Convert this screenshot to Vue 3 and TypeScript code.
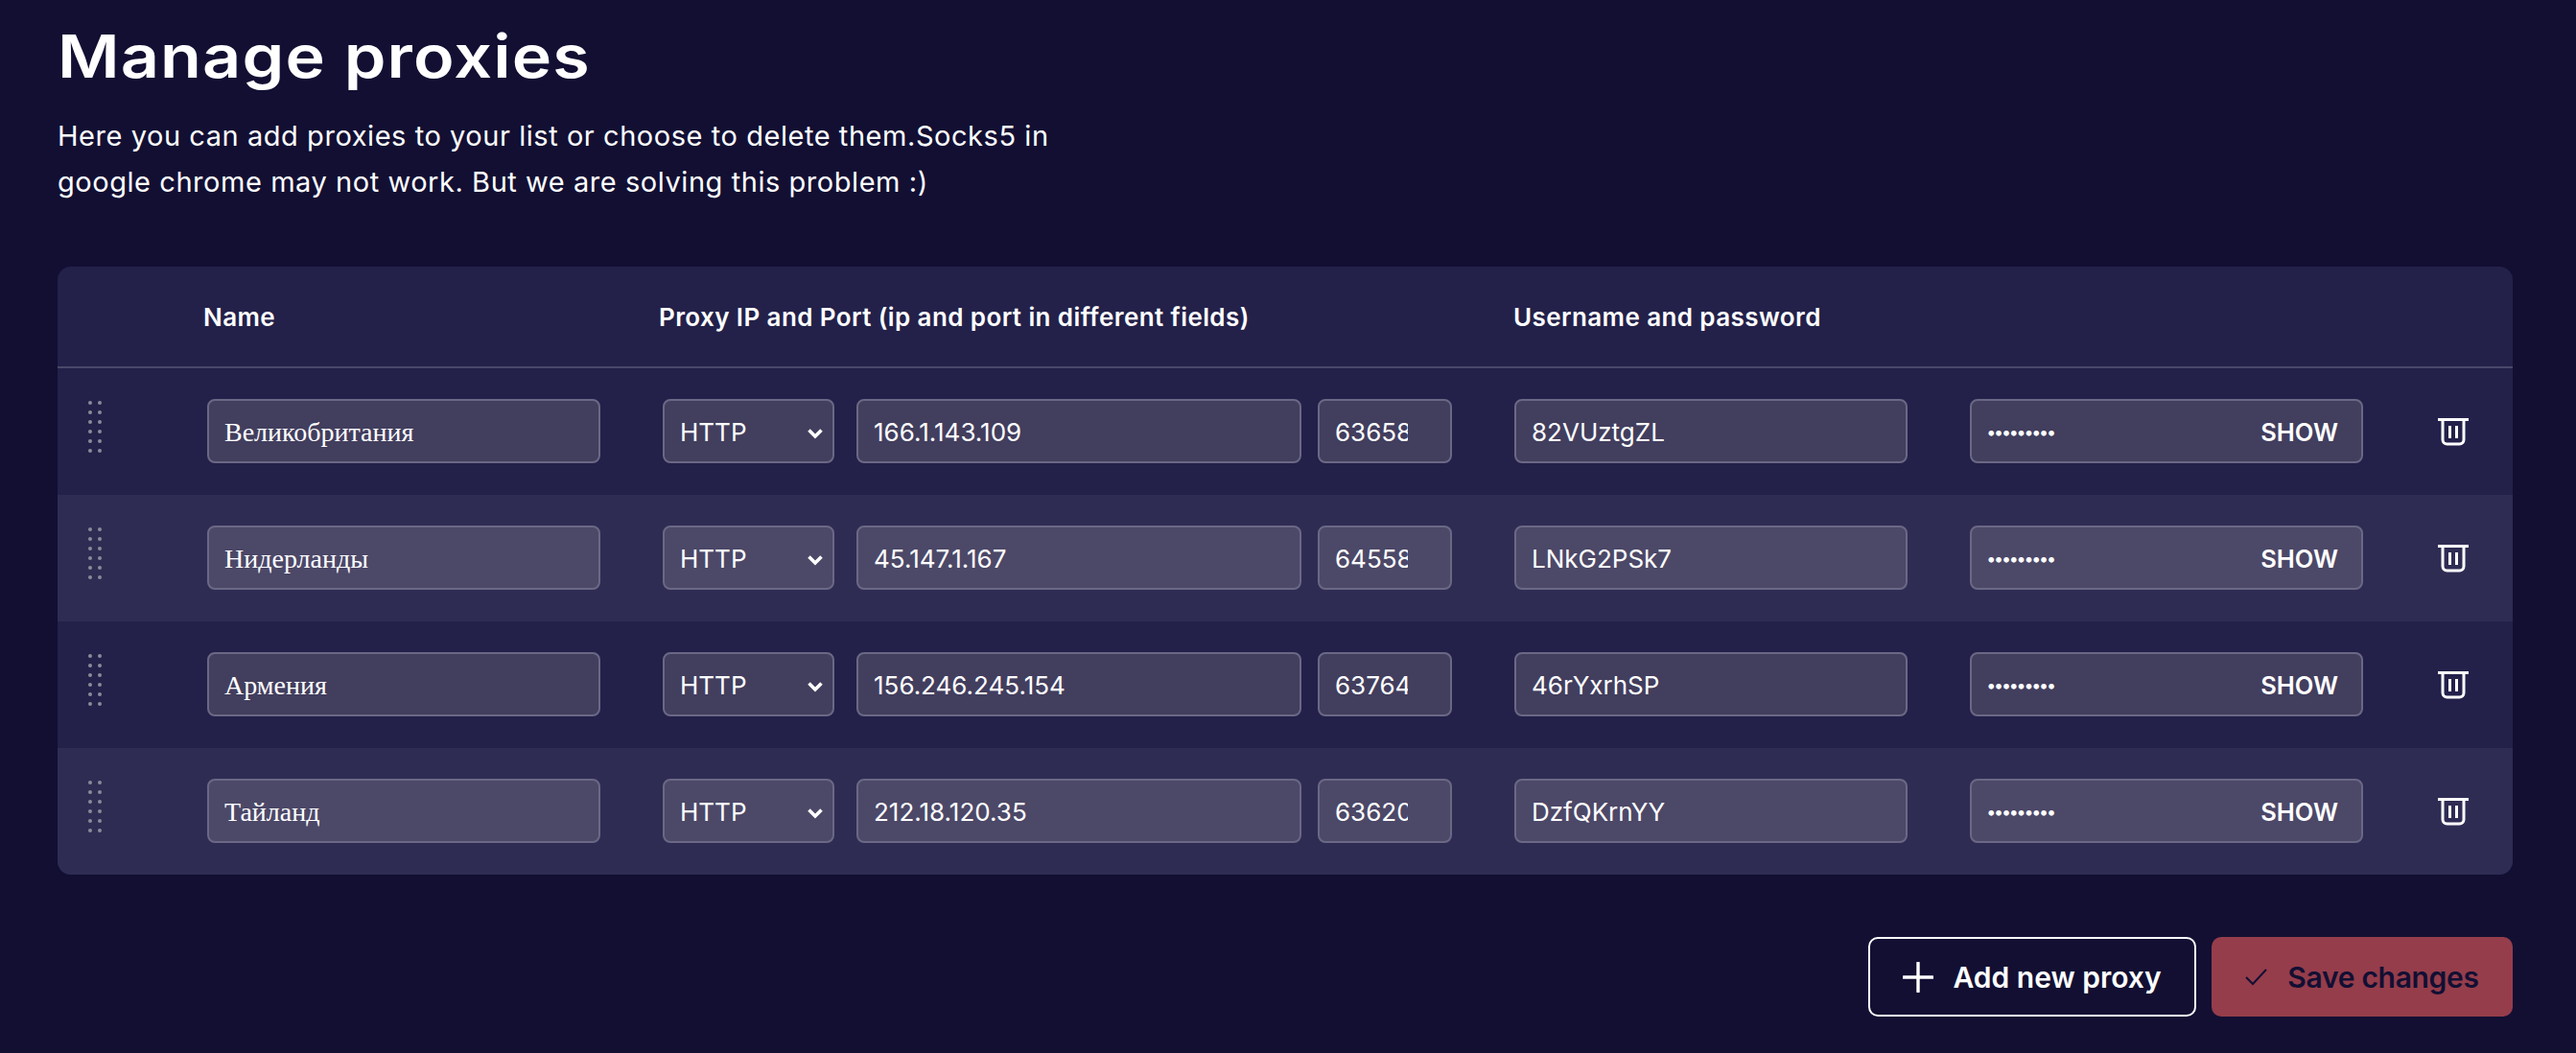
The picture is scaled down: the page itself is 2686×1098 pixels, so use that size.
<script setup lang="ts">
interface Proxy { name: string; ip: string; port: string; user: string }
const proxies: Proxy[] = [
  { name: 'Великобритания', ip: '166.1.143.109', port: '63658', user: '82VUztgZL' },
  { name: 'Нидерланды', ip: '45.147.1.167', port: '64558', user: 'LNkG2PSk7' },
  { name: 'Армения', ip: '156.246.245.154', port: '63764', user: '46rYxrhSP' },
  { name: 'Тайланд', ip: '212.18.120.35', port: '63620', user: 'DzfQKrnYY' },
]
</script>

<template>
  <main class="page">
    <h1 class="title">Manage proxies</h1>
    <p class="lead">Here you can add proxies to your list or choose to delete them.Socks5 in<br />google chrome may not work. But we are solving this problem :)</p>

    <section class="table">
      <header class="head">
        <span class="h-name">Name</span>
        <span class="h-proxy">Proxy IP and Port (ip and port in different fields)</span>
        <span>Username and password</span>
      </header>
      <div v-for="p in proxies" :key="p.ip" class="row">
        <div class="handle"><i v-for="n in 12" :key="n"></i></div>
        <input class="field name" :value="p.name" />
        <div class="field select"><span>HTTP</span>
          <svg class="chevron" width="16" height="12" viewBox="0 0 16 12"><path d="M1.500 2.500l6.500 6.500 6.500-6.500" fill="none" stroke="#fff" stroke-width="3.600"/></svg>
        </div>
        <input class="field ip" :value="p.ip" />
        <input class="field port" :value="p.port" />
        <input class="field user" :value="p.user" />
        <div class="field pass">
          <span class="dots">•••••••••</span>
          <span class="show">SHOW</span>
        </div>
        <button class="trash" aria-label="Delete">
          <svg width="32" height="30" viewBox="0 0 32 30" fill="none" stroke="#fff" stroke-width="3">
            <path d="M0 2.500h32" />
            <path d="M5 2.500v21a4.500 4.500 0 0 0 4.500 4.500h13a4.500 4.500 0 0 0 4.500-4.500v-21" />
            <path d="M12.500 9v13M19.500 9v13" />
          </svg>
        </button>
      </div>
    </section>

    <footer class="actions">
      <button class="btn add">
        <svg width="32" height="32" viewBox="0 0 32 32"><path d="M16 1v30M1 16h30" stroke="#fff" stroke-width="3.400" stroke-linecap="round"/></svg>
        Add new proxy
      </button>
      <button class="btn save">
        <svg width="24" height="18" viewBox="0 0 24 18"><path d="M1 9l7 7L22 1" fill="none" stroke="#120f33" stroke-width="2"/></svg>
        Save changes
      </button>
    </footer>
  </main>
</template>

<style>
html, body { margin: 0; background: #120f33; }
</style>

<style scoped>
.page {
  box-sizing: border-box;
  width: 2686px;
  height: 1098px;
  padding: 16px 66px 0 60px;
  background: #120f33;
  color: #fff;
  font-family: "Inter", sans-serif;
  overflow: hidden;
}
.title {
  margin: 0;
  font-size: 62px;
  line-height: 86px;
  font-weight: 600;
  letter-spacing: 1px;
  transform: scaleX(1.13);
  transform-origin: left center;
}
.lead {
  margin: 16px 0 0;
  font-size: 29px;
  line-height: 48px;
  font-weight: 400;
  letter-spacing: 0.550px;
}
.table {
  margin-top: 64px;
  border-radius: 14px;
  overflow: hidden;
  background: #23214a;
}
.head {
  display: flex;
  align-items: center;
  height: 104px;
  padding-left: 152px;
  border-bottom: 2px solid #4a476a;
  font-size: 26px;
  font-weight: 600;
  letter-spacing: 0.400px;
}
.h-name { width: 475px; }
.h-proxy { width: 891px; }
.row {
  box-sizing: border-box;
  display: flex;
  align-items: center;
  height: 132px;
  padding-bottom: 1px;
  background: #23214a;
}
.row:nth-child(odd) { background: #2f2c54; }
.row:nth-child(odd) .field { background: #4c4868; }
.handle {
  display: grid;
  grid-template-columns: 4px 4px;
  grid-auto-rows: 4px;
  gap: 6px;
  margin: -10px 0 0 32px;
  width: 124px;
}
.handle i { border-radius: 50%; background: #8c8a98; }
.field {
  box-sizing: border-box;
  height: 67px;
  border: 2px solid #6b6885;
  border-radius: 8px;
  background: #423e5e;
  color: #fff;
  font: 400 26px "Inter", sans-serif;
  padding: 2px 16px 0;
  outline: none;
}
.name {
  width: 410px;
  font: 400 28px "Liberation Serif", serif;
}
.select {
  display: flex;
  align-items: center;
  justify-content: space-between;
  width: 179px;
  margin-left: 65px;
  padding-right: 10px;
}
.chevron { margin-top: 2px; }
.ip { width: 464px; margin-left: 23px; }
.port { width: 140px; margin-left: 17px; padding-right: 44px; }
.user { width: 410px; margin-left: 65px; }
.pass {
  display: flex;
  align-items: center;
  justify-content: space-between;
  width: 410px;
  margin-left: 65px;
  padding-right: 24px;
}
.dots { font-size: 18px; font-weight: 700; letter-spacing: -0.700px; }
.show { font-size: 25.500px; font-weight: 600; }
.trash {
  margin-left: 78px;
  padding: 0;
  border: 0;
  background: none;
  display: flex;
}
.actions {
  display: flex;
  justify-content: flex-end;
  gap: 16px;
  margin-top: 65px;
}
.btn {
  box-sizing: border-box;
  display: flex;
  align-items: center;
  justify-content: center;
  height: 83px;
  border-radius: 10px;
  font: 600 30px "Inter", sans-serif;
}
.add {
  width: 342px;
  gap: 20px;
  background: transparent;
  border: 2px solid #fff;
  color: #fff;
}
.save {
  width: 314px;
  gap: 20px;
  background: #953d4b;
  border: 0;
  color: #120f33;
  letter-spacing: -0.300px;
}
</style>
